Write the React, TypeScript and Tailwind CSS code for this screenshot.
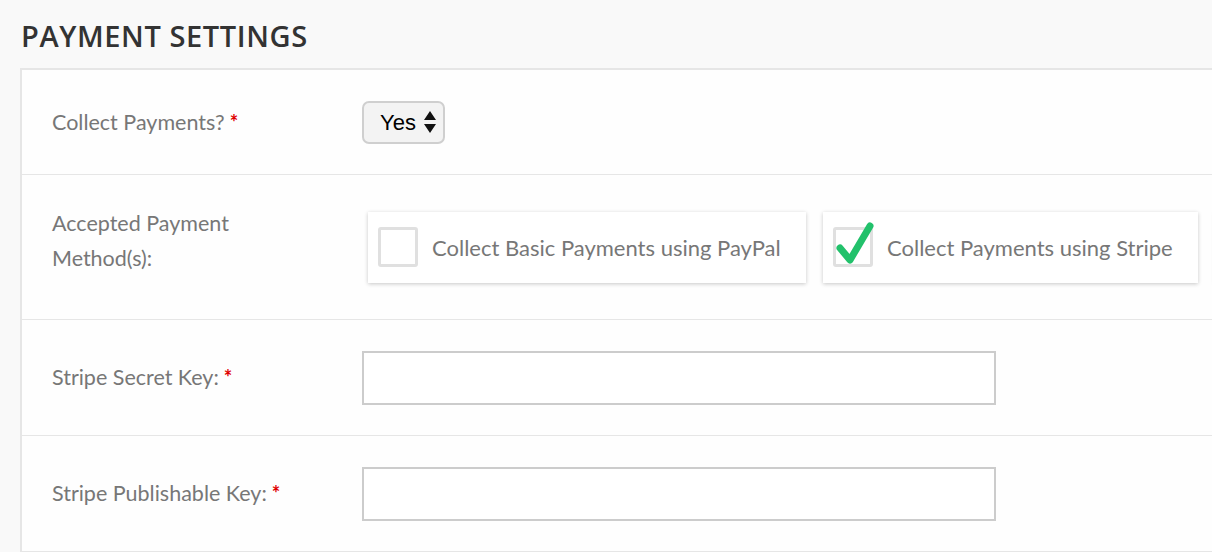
import { useState } from 'react';

function Required() {
  return <span className="ml-[5px] text-[20px] font-bold text-[#e00000]">*</span>;
}

function Row({ label, children, className, labelClass = '' }: { label: React.ReactNode; children: React.ReactNode; className: string; labelClass?: string }) {
  return (
    <div className={`flex items-center border-b border-[#e6e6e6] ${className}`}>
      <div className={`w-[340px] shrink-0 pl-[30px] pr-[80px] text-[21.5px] leading-[35px] text-[#777] ${labelClass}`}>{label}</div>
      <div className="flex flex-1 items-center">{children}</div>
    </div>
  );
}

function CheckCard({ label, checked, width }: { label: string; checked: boolean; width: string }) {
  return (
    <label className={`flex h-[71px] shrink-0 items-center bg-white pl-[10px] shadow-[0_1px_4px_rgba(0,0,0,0.22)] ${width}`}>
      <span className="relative h-[40px] w-[40px] shrink-0 rounded-[3px] border-[3px] border-[#e0e0e0] bg-white">
        {checked && (
          <svg className="absolute -left-[1px] -top-[8px]" width="42" height="44" viewBox="0 0 42 44">
            <path d="M5 26 L15 38 L35 4" fill="none" stroke="#22c16b" strokeWidth="7" strokeLinecap="round" strokeLinejoin="round" />
          </svg>
        )}
      </span>
      <span className="ml-[14px] whitespace-nowrap text-[22px] text-[#777]">{label}</span>
    </label>
  );
}

export default function App() {
  const [secret, setSecret] = useState('');
  const [publishable, setPublishable] = useState('');

  return (
    <div className="h-[552px] w-[1212px] overflow-hidden bg-[#f9f9f9] font-['Lato','Liberation_Sans',sans-serif]">
      <h1 className="px-[21px] pt-[17px] pb-[13px] font-['Open_Sans','Liberation_Sans',sans-serif] text-[29px] font-semibold leading-[38px] tracking-[0.6px] text-[#333]">
        PAYMENT SETTINGS
      </h1>
      <div className="ml-[20px] w-[1220px] border-l-2 border-t-2 border-[#e6e6e6] bg-[#fefefe]">
        <Row label={<>Collect Payments?<Required /></>} className="h-[105px]">
          <div className="flex h-[43px] w-[83px] items-center rounded-[7px] border-2 border-[#cfcfcf] bg-[#f3f3f3] pl-[16px]">
            <span className="font-['Liberation_Sans',sans-serif] text-[22px] text-black">Yes</span>
            <svg className="ml-[8px]" width="12" height="22" viewBox="0 0 12 22">
              <path d="M6 0 L12 9 L0 9 Z M0 13 L12 13 L6 22 Z" fill="#111" />
            </svg>
          </div>
        </Row>
        <Row label="Accepted Payment Method(s):" className="h-[145px]" labelClass="-mt-[12px]">
          <div className="flex gap-[17px] pl-[6px]">
            <CheckCard label="Collect Basic Payments using PayPal" checked={false} width="w-[438px]" />
            <CheckCard label="Collect Payments using Stripe" checked width="w-[375px]" />
            <CheckCard label="" checked={false} width="w-[200px]" />
          </div>
        </Row>
        <Row label={<>Stripe Secret Key:<Required /></>} className="h-[116px]">
          <input
            value={secret}
            onChange={(e) => setSecret(e.target.value)}
            className="h-[54px] w-[634px] border-2 border-[#cccccc] bg-white px-3 text-[18px] outline-none"
          />
        </Row>
        <Row label={<>Stripe Publishable Key:<Required /></>} className="h-[116px]">
          <input
            value={publishable}
            onChange={(e) => setPublishable(e.target.value)}
            className="h-[54px] w-[634px] border-2 border-[#cccccc] bg-white px-3 text-[18px] outline-none"
          />
        </Row>
      </div>
    </div>
  );
}
